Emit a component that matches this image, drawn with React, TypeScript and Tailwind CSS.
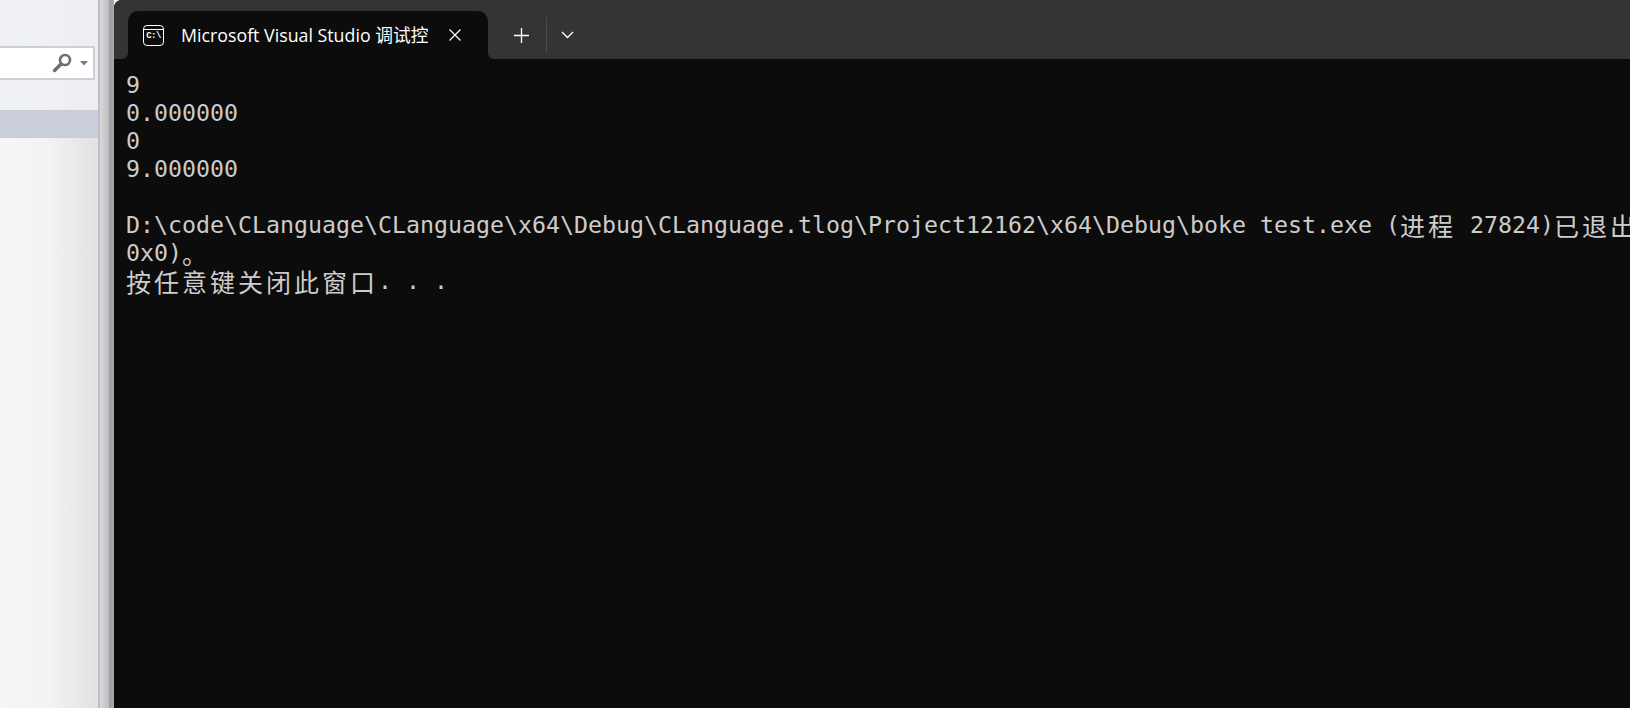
import React from "react";

const CJK = ({ c }: { c: string }) => (
  <span
    className="inline-block w-[28px] text-left text-[25px] leading-[28px] align-top"
    style={{ fontFamily: '"Noto Sans CJK SC", sans-serif' }}
  >
    {c}
  </span>
);

const Line = ({ children }: { children?: React.ReactNode }) => (
  <div className="h-[28px] whitespace-pre leading-[28px]">{children}</div>
);

const cjkify = (s: string) =>
  Array.from(s).map((ch, i) =>
    /[\u3000-\u9fff\uff00-\uffef]/.test(ch) ? <CJK key={i} c={ch} /> : <span key={i}>{ch}</span>
  );

const lines = [
  "9",
  "0.000000",
  "0",
  "9.000000",
  "",
  "D:\\code\\CLanguage\\CLanguage\\x64\\Debug\\CLanguage.tlog\\Project12162\\x64\\Debug\\boke test.exe (进程 27824)已退出",
  "0x0)。",
  "按任意键关闭此窗口. . .",
];

export default function App() {
  return (
    <div className="flex h-[708px] w-[1630px] overflow-hidden bg-[#f0f0f0]">
      {/* IDE fragment */}
      <div className="flex w-[98px] shrink-0 flex-col bg-gradient-to-r from-[#f6f6f6] via-[#f3f3f3] to-[#e2e2e2]">
        <div className="flex h-[110px] flex-col bg-gradient-to-r from-[#f0f1f6] to-[#eeeef2] pt-[46px]">
          <div className="flex h-[34px] w-[95px] items-center justify-end border-2 border-l-0 border-[#ccced9] bg-white pr-[5px]">
            <svg width="22" height="20" viewBox="0 0 22 20" className="mr-[7px]">
              <circle cx="14" cy="7" r="5" fill="none" stroke="#6e6e6e" strokeWidth="2.6" />
              <path d="M10 11 L3.5 17.5" stroke="#6e6e6e" strokeWidth="3.4" strokeLinecap="round" />
            </svg>
            <svg width="8" height="5" viewBox="0 0 8 5">
              <path d="M0 0 H8 L4 4.5 Z" fill="#7a7a7a" />
            </svg>
          </div>
        </div>
        <div className="h-[28px] bg-[#cacdda]" />
      </div>
      <div className="w-[2px] shrink-0 bg-[#bcbfcb]" />
      <div className="w-[9px] shrink-0 bg-gradient-to-r from-[#dadadd] to-[#bcbcbf]" />
      <div className="w-[5px] shrink-0 bg-gradient-to-r from-[#9c9ca6] to-[#a8a8aa]" />

      {/* Terminal window */}
      <div className="flex min-w-0 flex-1 flex-col overflow-hidden rounded-tl-[8px] bg-[#0c0c0c]">
        <div className="flex h-[59px] shrink-0">
          <div className="w-[14px] rounded-br-[6px] bg-[#343434]" />
          <div className="flex h-full w-[360px] items-end bg-[#343434]">
            <div className="flex h-[48px] w-full items-center rounded-t-[10px] bg-[#0c0c0c] pl-[15px]">
              <div className="flex h-[21px] w-[21px] flex-col rounded-[4px] border-[1.5px] border-white">
                <div className="h-[4px] border-b-[1.5px] border-white" />
                <span
                  className="flex-1 text-center text-[9px] font-bold leading-[13px] tracking-[-0.5px] text-white"
                  style={{ fontFamily: '"Liberation Mono", monospace' }}
                >
                  C:\
                </span>
              </div>
              <span
                className="ml-[17px] w-[247px] overflow-hidden whitespace-nowrap text-[17.8px] font-medium leading-[48px] text-white"
                style={{ fontFamily: '"Open Sans", "Noto Sans CJK SC", sans-serif' }}
              >
                Microsoft Visual Studio <span className="font-normal">调试控</span>
              </span>
              <svg width="12" height="12" viewBox="0 0 12 12" className="ml-[21px]">
                <path d="M0.5 0.5 L11.5 11.5 M11.5 0.5 L0.5 11.5" stroke="#fff" strokeWidth="1.2" />
              </svg>
            </div>
          </div>
          <div className="flex flex-1 items-end rounded-bl-[6px] bg-[#343434]">
            <div className="flex h-[48px] items-center">
              <svg width="15" height="15" viewBox="0 0 15 15" className="ml-[26px]">
                <path d="M7.5 0 V15 M0 7.5 H15" stroke="#fff" strokeWidth="1.3" />
              </svg>
              <div className="ml-[17px] h-[36px] w-px bg-[#4a4a4a]" />
              <svg width="13" height="8" viewBox="0 0 13 8" className="ml-[14px]">
                <path d="M1 1 L6.5 6.5 L12 1" fill="none" stroke="#fff" strokeWidth="1.3" />
              </svg>
            </div>
          </div>
        </div>
        <div
          className="overflow-hidden pl-[12px] pt-[12px] text-[23.25px] text-[#cccccc]"
          style={{ fontFamily: '"DejaVu Sans Mono", "Noto Sans CJK SC", monospace' }}
        >
          {lines.map((l, i) => (
            <Line key={i}>{cjkify(l)}</Line>
          ))}
        </div>
      </div>
    </div>
  );
}
